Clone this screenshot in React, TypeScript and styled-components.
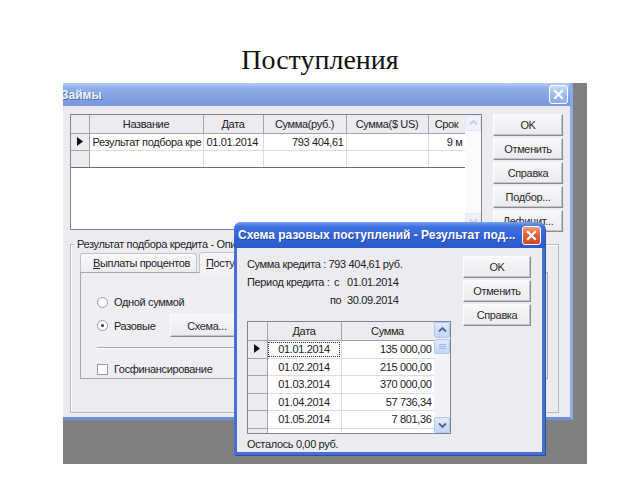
import React from 'react';
import styled, { createGlobalStyle, css } from 'styled-components';

const ui = `'Liberation Sans', Arial, sans-serif`;

// Tahoma-like metrics from Liberation Sans
const uiText = css`
  font: 11px ${ui};
  letter-spacing: -0.35px;
  color: #222;
`;

const GlobalStyle = createGlobalStyle`
  html, body { margin: 0; padding: 0; background: #fff; }
  body { font-family: ${ui}; }
`;

const Slide = styled.div`
  width: 640px;
  height: 480px;
  display: flex;
  flex-direction: column;
  background: #fff;
  overflow: hidden;
`;

const SlideTitle = styled.h1`
  margin: 44px 0 0;
  font: 400 28px/32px 'Liberation Serif', 'Times New Roman', serif;
  color: #111;
  text-align: center;
`;

const Desktop = styled.div`
  position: relative;
  margin: 7px 0 0 63px;
  width: 524px;
  height: 381px;
  background: #808080;
  overflow: hidden;
`;

// windows sit on the desktop at their own place
const MainWindow = styled.div`
  position: absolute;
  left: 0;
  top: 0;
  width: 510px;
  height: 337px;
  box-sizing: border-box;
  display: flex;
  flex-direction: column;
  background: #ecebf0;
  border-right: 3px solid #8fa9e2;
  border-bottom: 3px solid #6f90d4;
`;

const Dialog = styled.div`
  position: absolute;
  left: 171px;
  top: 139px;
  width: 311px;
  height: 233px;
  box-sizing: border-box;
  display: flex;
  flex-direction: column;
  padding: 0 3px 3px;
  background: #4470d8;
  border-radius: 7px 7px 0 0;
  box-shadow: 1px 1px 0 #2c4ea8;
`;

const TitleBar = styled.div<{ $active?: boolean }>`
  flex: none;
  height: ${p => (p.$active ? 26 : 23)}px;
  margin: ${p => (p.$active ? '0 -3px' : '0')};
  padding: ${p => (p.$active ? '0 4px 0 4px' : '0 2px 0 0')};
  display: flex;
  align-items: center;
  justify-content: space-between;
  border-radius: ${p => (p.$active ? '7px 7px 0 0' : '0')};
  background: ${p =>
    p.$active
      ? 'linear-gradient(180deg, #7aa3f2 0%, #3f72e0 18%, #3263d6 60%, #2c5ac9 100%)'
      : 'linear-gradient(180deg, #b4cbf3 0%, #8eaeea 25%, #7f9fe2 70%, #7a98dc 100%)'};
  color: ${p => (p.$active ? '#fff' : '#eef3ff')};
  font: bold 12px ${ui};
  white-space: nowrap;
  overflow: hidden;
`;

const TitleText = styled.span<{ $indent?: number }>`
  margin-left: ${p => p.$indent ?? 0}px;
  text-shadow: 1px 1px 0 rgba(20, 40, 110, 0.45);
`;

const CloseBox = styled.span<{ $active?: boolean }>`
  flex: none;
  width: 19px;
  height: 19px;
  box-sizing: border-box;
  display: flex;
  align-items: center;
  justify-content: center;
  border: 1px solid #fff;
  border-radius: 3px;
  background: ${p =>
    p.$active
      ? 'linear-gradient(180deg, #f2a07f 0%, #e2613c 45%, #cf4a26 100%)'
      : 'linear-gradient(180deg, #c9daf7 0%, #9db9ec 50%, #8eabe6 100%)'};
`;

const CloseIcon = () => (
  <svg width="11" height="11" viewBox="0 0 11 11">
    <path d="M2 2 L9 9 M9 2 L2 9" stroke="#fff" strokeWidth="2.2" strokeLinecap="square" />
  </svg>
);

/* ---------- main window body ---------- */

const MainClient = styled.div`
  flex: 1;
  display: flex;
  flex-direction: column;
  padding: 8px 7px 0 7px;
`;

const TopRow = styled.div`
  display: flex;
  gap: 11px;
  align-items: flex-start;
`;

const GridFrame = styled.div<{ $w: number; $h: number }>`
  width: ${p => p.$w}px;
  height: ${p => p.$h}px;
  box-sizing: border-box;
  display: flex;
  background: #fff;
  border: 1px solid #7f8590;
  overflow: hidden;
`;

const GridArea = styled.div`
  flex: 1;
  overflow: hidden;
`;

const Table = styled.table<{ $w: number }>`
  width: ${p => p.$w}px;
  border-collapse: collapse;
  table-layout: fixed;
  ${uiText};
`;

const HeadCell = styled.th`
  height: 18px;
  padding: 0 2px;
  font-weight: normal;
  background: #ecebf0;
  border: 1px solid #a3a3ac;
  border-top: none;
  text-align: center;
  white-space: nowrap;
  overflow: hidden;
`;

const Cell = styled.td<{ $align?: string; $h?: number; $focus?: boolean }>`
  height: ${p => p.$h ?? 16}px;
  padding: 0 ${p => (p.$align === 'right' ? 2 : 3)}px;
  border: 1px solid #dcdce2;
  white-space: nowrap;
  overflow: hidden;
  text-overflow: clip;
  text-align: ${p => p.$align ?? 'left'};
  outline: ${p => (p.$focus ? '1px dotted #333' : 'none')};
  outline-offset: -2px;
`;

const MarkerCell = styled.td`
  padding: 0;
  background: #ecebf0;
  border: 1px solid #a3a3ac;
  border-left: none;
  text-align: center;
  font-size: 9px;
  line-height: 1;
`;

const LastRow = styled.tr`
  td { border-bottom: 1px solid #6c6c74; }
`;

const Scroll = styled.div<{ $pale?: boolean }>`
  flex: none;
  width: 16px;
  display: flex;
  flex-direction: column;
  background: ${p => (p.$pale ? '#fbfbfd' : '#f3f3f7')};
`;

const ScrollButton = styled.div<{ $pale?: boolean }>`
  height: 16px;
  box-sizing: border-box;
  display: flex;
  align-items: center;
  justify-content: center;
  border: 1px solid ${p => (p.$pale ? '#e2e8f3' : '#b3c6ee')};
  border-radius: 2px;
  background: ${p => (p.$pale ? '#eef2f9' : 'linear-gradient(180deg, #e0e9fd, #c4d5fa)')};
`;

const ScrollThumb = styled(ScrollButton)`
  height: 15px;
  margin-top: 1px;
`;

const ScrollGap = styled.div`
  flex: 1;
`;

const Chevron = ({ down, pale }: { down?: boolean; pale?: boolean }) => (
  <svg width="9" height="6" viewBox="0 0 9 6">
    <path
      d={down ? 'M1 1.5 L4.5 5 L8 1.5' : 'M1 4.5 L4.5 1 L8 4.5'}
      stroke={pale ? '#c3cfe4' : '#4d6491'}
      strokeWidth="1.8"
      fill="none"
    />
  </svg>
);

const Grip = () => (
  <svg width="7" height="7" viewBox="0 0 7 7">
    <path d="M0 1.5 H7 M0 3.5 H7 M0 5.5 H7" stroke="#9fb4e0" strokeWidth="1" />
  </svg>
);

const ButtonColumn = styled.div<{ $w: number }>`
  flex: none;
  width: ${p => p.$w}px;
  display: flex;
  flex-direction: column;
  gap: 2px;
`;

const Button = styled.button<{ $w?: number }>`
  width: ${p => (p.$w ? `${p.$w}px` : '100%')};
  height: 22px;
  flex: none;
  padding: 0;
  ${uiText};
  color: #2a2a2a;
  background: linear-gradient(180deg, #f8f8fa 0%, #ebeaef 100%);
  border: 1px solid;
  border-color: #fdfdfe #8a8a94 #8a8a94 #fdfdfe;
  box-shadow: inset -1px -1px 0 #c4c4cc;
  white-space: nowrap;
  overflow: hidden;
`;

const GroupBox = styled.fieldset`
  margin: 6px 0 0;
  width: 489px;
  height: 175px;
  box-sizing: border-box;
  padding: 0 10px 2px 9px;
  border: 1px solid #b9b9c3;
  box-shadow: inset 1px 1px 0 #fff;
  display: flex;
  flex-direction: column;
`;

const GroupLegend = styled.legend`
  margin-left: -5px;
  padding: 0 2px;
  ${uiText};
  white-space: nowrap;
`;

const TabsRow = styled.div`
  display: flex;
  align-items: flex-end;
  height: 21px;
  margin-top: 1px;
`;

const Tab = styled.div<{ $w: number; $selected?: boolean }>`
  width: ${p => p.$w}px;
  height: ${p => (p.$selected ? 21 : 19)}px;
  box-sizing: border-box;
  margin-right: 2px;
  padding-left: ${p => (p.$selected ? 6 : 12)}px;
  display: flex;
  align-items: center;
  ${uiText};
  border: 1px solid #c2c2cb;
  border-bottom: none;
  border-radius: 3px 3px 0 0;
  background: ${p => (p.$selected ? '#f4f3f7' : 'linear-gradient(180deg, #fafafc, #ecebf0)')};
  margin-bottom: ${p => (p.$selected ? -1 : 0)}px;
  position: relative;
`;

const TabPanel = styled.div`
  flex: 1;
  box-sizing: border-box;
  border: 1px solid #a7a7b2;
  background: #efeef3;
  padding: 20px 16px 0 16px;
  display: flex;
  flex-direction: column;
`;

const OptionRow = styled.div<{ $h: number; $gap?: number }>`
  height: ${p => p.$h}px;
  margin-top: ${p => p.$gap ?? 0}px;
  display: flex;
  align-items: center;
  ${uiText};
`;

const Radio = styled.span<{ $checked?: boolean }>`
  width: 11px;
  height: 11px;
  box-sizing: border-box;
  margin-right: 6px;
  border-radius: 50%;
  border: 1px solid #9a9aa6;
  background: #fff;
  display: flex;
  align-items: center;
  justify-content: center;
  &::after {
    content: '';
    width: 3px;
    height: 3px;
    border-radius: 50%;
    background: ${p => (p.$checked ? '#333' : 'transparent')};
  }
`;

const CheckBox = styled.span`
  width: 11px;
  height: 11px;
  box-sizing: border-box;
  margin-right: 6px;
  border: 1px solid #9a9aa6;
  background: #fff;
`;

const SchemeButton = styled(Button)`
  margin-left: 15px;
  height: 23px;
`;

const Separator = styled.div`
  margin-top: 10px;
  height: 0;
  border-top: 1px solid #a9a9b3;
  border-bottom: 1px solid #fff;
`;

/* ---------- dialog body ---------- */

const DialogClient = styled.div`
  flex: 1;
  background: #ecebf0;
  display: grid;
  grid-template-columns: 1fr 68px;
  grid-template-rows: 66px 113px 1fr;
  padding: 7px 11px 0 10px;
`;

const InfoBlock = styled.div`
  display: grid;
  grid-template-columns: 83px 17px auto;
  grid-auto-rows: 18px;
  align-items: center;
  ${uiText};
  white-space: nowrap;
`;

const InfoWide = styled.span`
  grid-column: 1 / -1;
`;

const InfoPrefix = styled.span<{ $pad?: number }>`
  padding-left: ${p => p.$pad ?? 0}px;
`;

const DialogButtons = styled(ButtonColumn)`
  grid-column: 2;
  grid-row: 1 / 3;
  margin-top: 1px;
`;

const Footer = styled.div`
  grid-column: 1 / -1;
  display: flex;
  align-items: center;
  padding-top: 1px;
  ${uiText};
`;

const mainCols = [18, 114, 60, 83, 82, 37];
const dialogCols = [19, 74, 93];
const sum = (a: number[]) => a.reduce((s, v) => s + v, 0);

const schedule = [
  ['01.01.2014', '135 000,00'],
  ['01.02.2014', '215 000,00'],
  ['01.03.2014', '370 000,00'],
  ['01.04.2014', '57 736,34'],
  ['01.05.2014', '7 801,36'],
  ['01.06.2014', '7 866,91'],
];

const Marker = () => (
  <svg width="6" height="9" viewBox="0 0 6 9">
    <path d="M0 0 L6 4.5 L0 9 Z" fill="#111" />
  </svg>
);

export default function App() {
  return (
    <>
      <GlobalStyle />
      <Slide>
        <SlideTitle>Поступления</SlideTitle>
        <Desktop>
          <MainWindow>
            <TitleBar>
              <TitleText $indent={-2}>Займы</TitleText>
              <CloseBox>
                <CloseIcon />
              </CloseBox>
            </TitleBar>
            <MainClient>
              <TopRow>
                <GridFrame $w={412} $h={116}>
                  <GridArea>
                    <Table $w={sum(mainCols)}>
                      <colgroup>
                        {mainCols.map((w, i) => (
                          <col key={i} style={{ width: w }} />
                        ))}
                      </colgroup>
                      <thead>
                        <tr>
                          <HeadCell style={{ borderLeft: 'none' }} />
                          <HeadCell>Название</HeadCell>
                          <HeadCell>Дата</HeadCell>
                          <HeadCell>Сумма(руб.)</HeadCell>
                          <HeadCell>Сумма($ US)</HeadCell>
                          <HeadCell style={{ borderRight: '1px solid #6c6c74' }}>Срок</HeadCell>
                        </tr>
                      </thead>
                      <tbody>
                        <tr>
                          <MarkerCell>
                            <Marker />
                          </MarkerCell>
                          <Cell>Результат подбора кре</Cell>
                          <Cell>01.01.2014</Cell>
                          <Cell $align="right">793 404,61</Cell>
                          <Cell />
                          <Cell $align="right" style={{ borderRight: '1px solid #6c6c74' }}>9 м</Cell>
                        </tr>
                        <LastRow>
                          <MarkerCell />
                          <Cell />
                          <Cell />
                          <Cell />
                          <Cell />
                          <Cell style={{ borderRight: '1px solid #6c6c74' }} />
                        </LastRow>
                      </tbody>
                    </Table>
                  </GridArea>
                  <Scroll $pale>
                    <ScrollButton $pale>
                      <Chevron pale />
                    </ScrollButton>
                    <ScrollGap />
                    <ScrollButton $pale>
                      <Chevron down pale />
                    </ScrollButton>
                  </Scroll>
                </GridFrame>
                <ButtonColumn $w={70}>
                  <Button>OK</Button>
                  <Button>Отменить</Button>
                  <Button>Справка</Button>
                  <Button>Подбор...</Button>
                  <Button>Дефицит...</Button>
                </ButtonColumn>
              </TopRow>
              <GroupBox>
                <GroupLegend>Результат подбора кредита - Описание</GroupLegend>
                <TabsRow>
                  <Tab $w={117}>
                    <span>
                      <u>В</u>ыплаты процентов
                    </span>
                  </Tab>
                  <Tab $w={100} $selected>
                    <span>
                      <u>П</u>оступления
                    </span>
                  </Tab>
                </TabsRow>
                <TabPanel>
                  <OptionRow $h={18}>
                    <Radio />
                    Одной суммой
                  </OptionRow>
                  <OptionRow $h={23} $gap={3}>
                    <Radio $checked />
                    Разовые
                    <SchemeButton $w={73}>Схема...</SchemeButton>
                  </OptionRow>
                  <Separator />
                  <OptionRow $h={18} $gap={11}>
                    <CheckBox />
                    Госфинансирование
                  </OptionRow>
                </TabPanel>
              </GroupBox>
            </MainClient>
          </MainWindow>

          <Dialog>
            <TitleBar $active>
              <TitleText>Схема разовых поступлений - Результат под...</TitleText>
              <CloseBox $active>
                <CloseIcon />
              </CloseBox>
            </TitleBar>
            <DialogClient>
              <InfoBlock>
                <InfoWide>Сумма кредита : 793 404,61 руб.</InfoWide>
                <span>Период кредита :</span>
                <InfoPrefix $pad={4}>с</InfoPrefix>
                <span>01.01.2014</span>
                <span />
                <InfoPrefix>по</InfoPrefix>
                <span>30.09.2014</span>
              </InfoBlock>
              <DialogButtons $w={68}>
                <Button>OK</Button>
                <Button>Отменить</Button>
                <Button>Справка</Button>
              </DialogButtons>
              <GridFrame $w={204} $h={113}>
                <GridArea>
                  <Table $w={sum(dialogCols)}>
                    <colgroup>
                      {dialogCols.map((w, i) => (
                        <col key={i} style={{ width: w }} />
                      ))}
                    </colgroup>
                    <thead>
                      <tr>
                        <HeadCell style={{ borderLeft: 'none' }} />
                        <HeadCell>Дата</HeadCell>
                        <HeadCell>Сумма</HeadCell>
                      </tr>
                    </thead>
                    <tbody>
                      {schedule.map(([d, s], i) => (
                        <tr key={d}>
                          <MarkerCell>{i === 0 && <Marker />}</MarkerCell>
                          <Cell $align="center" $h={16.5} $focus={i === 0}>
                            {d}
                          </Cell>
                          <Cell $align="right" $h={16.5}>
                            {s}
                          </Cell>
                        </tr>
                      ))}
                    </tbody>
                  </Table>
                </GridArea>
                <Scroll>
                  <ScrollButton>
                    <Chevron />
                  </ScrollButton>
                  <ScrollThumb>
                    <Grip />
                  </ScrollThumb>
                  <ScrollGap />
                  <ScrollButton>
                    <Chevron down />
                  </ScrollButton>
                </Scroll>
              </GridFrame>
              <Footer>Осталось 0,00 руб.</Footer>
            </DialogClient>
          </Dialog>
        </Desktop>
      </Slide>
    </>
  );
}
